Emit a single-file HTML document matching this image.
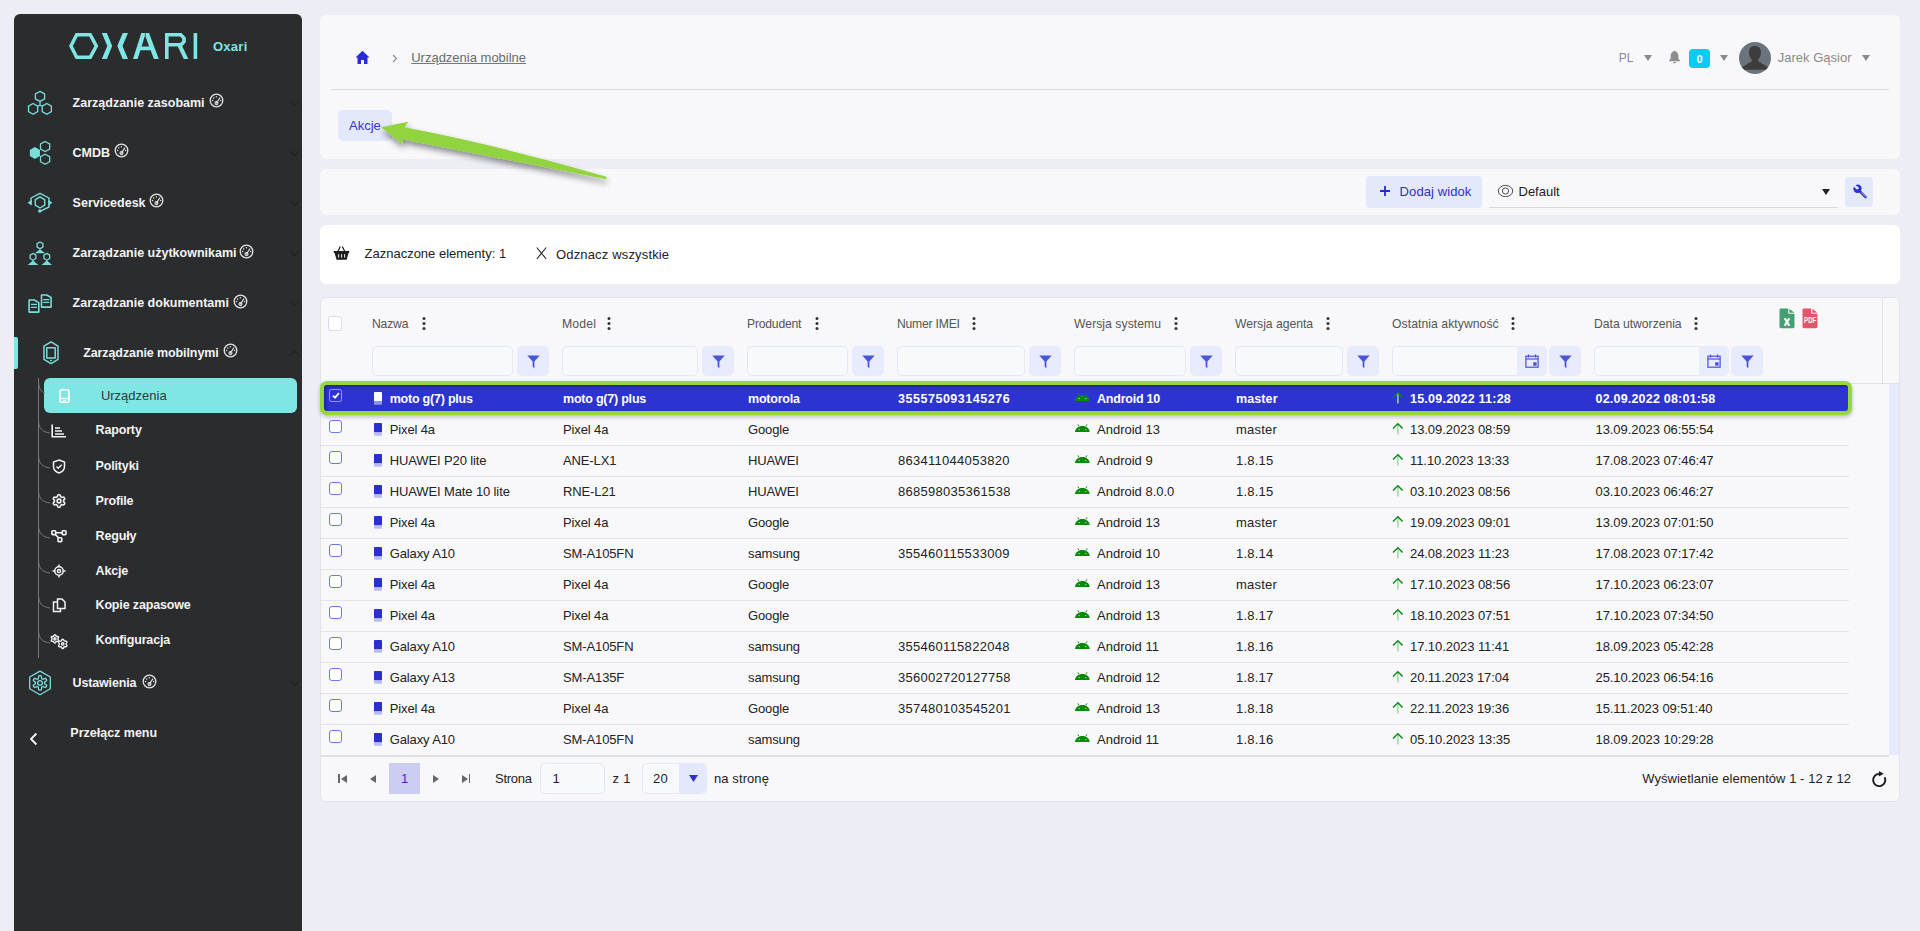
<!DOCTYPE html>
<html><head><meta charset="utf-8"><style>
html,body{margin:0;padding:0;}
body{width:1920px;height:931px;overflow:hidden;position:relative;background:#ededf5;font-family:"Liberation Sans", sans-serif;}
.abs{position:absolute;}
.t{position:absolute;white-space:nowrap;}
#sb{position:absolute;left:14px;top:14px;width:288px;height:940px;background:#2b2c2e;border-radius:6px;}
.card{position:absolute;background:#f8f8fa;border-radius:6px;}
.fb{background:#e8ebfb;border-radius:5px;}
.inp{border:1px solid #e4e7f6;border-radius:5px;background:#f8f9fc;}
</style></head><body>
<div id="sb"></div>
<svg class="abs" style="left:60px;top:28px" width="150" height="36" viewBox="60 28 150 36"><g fill="#7fe6e4" fill-rule="evenodd">
<path d="M69 46 L75.6 33.1 H91.3 L98.3 46 L91.3 58.9 H75.6 Z M72.9 46 L77.7 36.5 H89.2 L94.4 46 L89.2 55.5 H77.7 Z"/>
<path d="M101.8 33.1 H106.9 L112.2 46 L106.9 58.9 H101.8 L107.3 46 Z"/>
<path d="M122.7 33.1 H128 L122.5 46 L128 58.9 H122.7 L117.3 46 Z"/>
<path d="M133 58.9 L141.3 33.1 H149 L158.8 58.9 H153.9 L150.6 50.3 H140.4 L137.6 58.9 Z M141.6 46.4 H149.15 L145.6 36.8 H144.6 Z"/>
<path d="M165 33.1 H181.5 L185.8 37.4 V42.3 L182.2 46.2 L188.4 58.9 H183.8 L177.8 46.6 H168.6 V58.9 H165 Z M168.6 36.6 H180 L182.2 38.8 V41 L180.2 43.1 H168.6 Z"/>
<rect x="193.6" y="33.1" width="3.6" height="25.8"/>
</g><path d="M145.4 33 V40" stroke="#2b2c2e" stroke-width="0.6"/></svg>
<div class="t" style="left:213px;top:39.50px;font-size:13px;line-height:13px;font-weight:bold;color:#7fe3e2;letter-spacing:0.25px">Oxari</div>
<svg class="abs" style="left:0px;top:0px" width="60" height="120" viewBox="0 0 60 120"><g fill="none" stroke="#78dedb" stroke-width="1.3"><path d="M40.00 91.40 L44.60 93.90 L44.60 98.90 L40.00 101.40 L35.40 98.90 L35.40 93.90 Z M33.10 103.50 L37.70 106.20 L37.70 111.60 L33.10 114.30 L28.50 111.60 L28.50 106.20 Z M46.80 103.50 L51.40 106.20 L51.40 111.60 L46.80 114.30 L42.20 111.60 L42.20 106.20 Z M40 101.4 V105.5 M37.7 106.2 L40 105.2 L42.2 106.2"/></g></svg>
<div class="t" style="left:72.6px;top:96.82px;font-size:12.5px;line-height:12.5px;font-weight:bold;color:#f4f4f4;letter-spacing:0px">Zarządzanie zasobami</div>
<svg class="abs" style="left:0px;top:130px" width="60" height="40" viewBox="0 130 60 40"><path d="M34.90 147.00 L39.95 150.00 L39.95 156.00 L34.90 159.00 L29.85 156.00 L29.85 150.00 Z" fill="#78dedb"/><g fill="none" stroke="#78dedb" stroke-width="1.3"><path d="M45.10 141.50 L49.70 144.00 L49.70 149.00 L45.10 151.50 L40.50 149.00 L40.50 144.00 Z M45.10 154.20 L49.70 156.70 L49.70 161.70 L45.10 164.20 L40.50 161.70 L40.50 156.70 Z"/></g></svg>
<div class="t" style="left:72.6px;top:146.62px;font-size:12.5px;line-height:12.5px;font-weight:bold;color:#f4f4f4;letter-spacing:0px">CMDB</div>
<svg class="abs" style="left:0px;top:180px" width="60" height="40" viewBox="0 180 60 40"><g fill="none" stroke="#78dedb" stroke-width="1.4" stroke-linejoin="round"><path d="M31 204.5 V198 L40 193.3 L49 198 V207 L40 211.4"/><path d="M40.00 196.80 L44.70 199.60 L44.70 205.20 L40.00 208.00 L35.30 205.20 L35.30 199.60 Z"/></g><path d="M27.6 202.7 L31.6 199.8 V205.6 Z M52.4 202.7 L48.4 199.8 V205.6 Z" fill="#78dedb"/><circle cx="39.8" cy="211" r="1.7" fill="#78dedb"/></svg>
<div class="t" style="left:72.6px;top:196.72px;font-size:12.5px;line-height:12.5px;font-weight:bold;color:#f4f4f4;letter-spacing:0px">Servicedesk</div>
<svg class="abs" style="left:0px;top:230px" width="60" height="40" viewBox="0 230 60 40"><g fill="none" stroke="#78dedb" stroke-width="1.3"><path d="M40.00 242.00 L42.90 243.70 L42.90 247.10 L40.00 248.80 L37.10 247.10 L37.10 243.70 Z M33.00 253.40 L35.90 255.10 L35.90 258.50 L33.00 260.20 L30.10 258.50 L30.10 255.10 Z M46.80 253.40 L49.70 255.10 L49.70 258.50 L46.80 260.20 L43.90 258.50 L43.90 255.10 Z"/></g><path d="M40 249.3 L45.2 253.2 H34.8 Z M33 260.6 L38.3 265 H27.7 Z M46.8 260.6 L52.1 265 H41.5 Z" fill="#78dedb"/></svg>
<div class="t" style="left:72.6px;top:246.82px;font-size:12.5px;line-height:12.5px;font-weight:bold;color:#f4f4f4;letter-spacing:0px">Zarządzanie użytkownikami</div>
<svg class="abs" style="left:0px;top:280px" width="60" height="40" viewBox="0 280 60 40"><g fill="none" stroke="#78dedb" stroke-width="1.6" stroke-linejoin="round"><path d="M29.1 300 H34.3 L38.8 302.6 V312.1 H29.1 Z"/><path d="M41.5 295 H46.7 L51.1 297.5 V307.1 H41.5 Z"/></g><path d="M30.9 304.3 H37 M30.9 307.3 H37 M43.2 299.6 H49.3 M43.2 302.3 H49.3" stroke="#78dedb" stroke-width="1.2"/></svg>
<div class="t" style="left:72.6px;top:296.82px;font-size:12.5px;line-height:12.5px;font-weight:bold;color:#f4f4f4;letter-spacing:0px">Zarządzanie dokumentami</div>
<svg class="abs" style="left:209.3px;top:92.9px" width="15" height="15" viewBox="-0.5 -0.5 15 15"><circle cx="7" cy="7" r="6.3" fill="none" stroke="#e6e6e6" stroke-width="1.3"/><g fill="#e6e6e6"><circle cx="6.9" cy="3.2" r="0.75"/><circle cx="4.2" cy="4.4" r="0.75"/><circle cx="3.1" cy="7.1" r="0.75"/><circle cx="11.1" cy="7.1" r="0.75"/></g><path d="M7 9.5 L10.2 4.5" stroke="#e6e6e6" stroke-width="1.2" stroke-linecap="round"/><circle cx="7" cy="9.6" r="1.5" fill="none" stroke="#e6e6e6" stroke-width="1.1"/></svg>
<svg class="abs" style="left:113.6px;top:143px" width="15" height="15" viewBox="-0.5 -0.5 15 15"><circle cx="7" cy="7" r="6.3" fill="none" stroke="#e6e6e6" stroke-width="1.3"/><g fill="#e6e6e6"><circle cx="6.9" cy="3.2" r="0.75"/><circle cx="4.2" cy="4.4" r="0.75"/><circle cx="3.1" cy="7.1" r="0.75"/><circle cx="11.1" cy="7.1" r="0.75"/></g><path d="M7 9.5 L10.2 4.5" stroke="#e6e6e6" stroke-width="1.2" stroke-linecap="round"/><circle cx="7" cy="9.6" r="1.5" fill="none" stroke="#e6e6e6" stroke-width="1.1"/></svg>
<svg class="abs" style="left:149.3px;top:193px" width="15" height="15" viewBox="-0.5 -0.5 15 15"><circle cx="7" cy="7" r="6.3" fill="none" stroke="#e6e6e6" stroke-width="1.3"/><g fill="#e6e6e6"><circle cx="6.9" cy="3.2" r="0.75"/><circle cx="4.2" cy="4.4" r="0.75"/><circle cx="3.1" cy="7.1" r="0.75"/><circle cx="11.1" cy="7.1" r="0.75"/></g><path d="M7 9.5 L10.2 4.5" stroke="#e6e6e6" stroke-width="1.2" stroke-linecap="round"/><circle cx="7" cy="9.6" r="1.5" fill="none" stroke="#e6e6e6" stroke-width="1.1"/></svg>
<svg class="abs" style="left:239px;top:244px" width="15" height="15" viewBox="-0.5 -0.5 15 15"><circle cx="7" cy="7" r="6.3" fill="none" stroke="#e6e6e6" stroke-width="1.3"/><g fill="#e6e6e6"><circle cx="6.9" cy="3.2" r="0.75"/><circle cx="4.2" cy="4.4" r="0.75"/><circle cx="3.1" cy="7.1" r="0.75"/><circle cx="11.1" cy="7.1" r="0.75"/></g><path d="M7 9.5 L10.2 4.5" stroke="#e6e6e6" stroke-width="1.2" stroke-linecap="round"/><circle cx="7" cy="9.6" r="1.5" fill="none" stroke="#e6e6e6" stroke-width="1.1"/></svg>
<svg class="abs" style="left:232.7px;top:294px" width="15" height="15" viewBox="-0.5 -0.5 15 15"><circle cx="7" cy="7" r="6.3" fill="none" stroke="#e6e6e6" stroke-width="1.3"/><g fill="#e6e6e6"><circle cx="6.9" cy="3.2" r="0.75"/><circle cx="4.2" cy="4.4" r="0.75"/><circle cx="3.1" cy="7.1" r="0.75"/><circle cx="11.1" cy="7.1" r="0.75"/></g><path d="M7 9.5 L10.2 4.5" stroke="#e6e6e6" stroke-width="1.2" stroke-linecap="round"/><circle cx="7" cy="9.6" r="1.5" fill="none" stroke="#e6e6e6" stroke-width="1.1"/></svg>
<svg class="abs" style="left:288.6px;top:99.5px" width="11.5" height="6.5" viewBox="0 0 11.5 6.5"><path d="M1 1 L5.6 5.5 L10.2 1" fill="none" stroke="#202327" stroke-width="1.7"/></svg>
<svg class="abs" style="left:288.6px;top:149.5px" width="11.5" height="6.5" viewBox="0 0 11.5 6.5"><path d="M1 1 L5.6 5.5 L10.2 1" fill="none" stroke="#202327" stroke-width="1.7"/></svg>
<svg class="abs" style="left:288.6px;top:199.5px" width="11.5" height="6.5" viewBox="0 0 11.5 6.5"><path d="M1 1 L5.6 5.5 L10.2 1" fill="none" stroke="#202327" stroke-width="1.7"/></svg>
<svg class="abs" style="left:288.6px;top:249.5px" width="11.5" height="6.5" viewBox="0 0 11.5 6.5"><path d="M1 1 L5.6 5.5 L10.2 1" fill="none" stroke="#202327" stroke-width="1.7"/></svg>
<svg class="abs" style="left:288.6px;top:299.5px" width="11.5" height="6.5" viewBox="0 0 11.5 6.5"><path d="M1 1 L5.6 5.5 L10.2 1" fill="none" stroke="#202327" stroke-width="1.7"/></svg>
<div class="abs" style="left:14px;top:337px;width:4px;height:32px;background:#80e6e3;border-radius:0 2px 2px 0"></div>
<svg class="abs" style="left:0px;top:330px" width="70" height="40" viewBox="0 330 70 40"><g fill="none" stroke="#78dedb" stroke-width="1.5" stroke-linejoin="round"><path d="M51 341.8 L58 346.1 V359.3 L51 363.6 L44 359.3 V346.1 Z"/><rect x="46.8" y="347.7" width="8.4" height="10.4"/></g><rect x="50" y="359.8" width="2" height="1.3" fill="#78dedb"/></svg>
<div class="t" style="left:83.2px;top:346.62px;font-size:12.5px;line-height:12.5px;font-weight:bold;color:#f4f4f4;letter-spacing:-0.1px">Zarządzanie mobilnymi</div>
<svg class="abs" style="left:223px;top:343px" width="15" height="15" viewBox="-0.5 -0.5 15 15"><circle cx="7" cy="7" r="6.3" fill="none" stroke="#e6e6e6" stroke-width="1.3"/><g fill="#e6e6e6"><circle cx="6.9" cy="3.2" r="0.75"/><circle cx="4.2" cy="4.4" r="0.75"/><circle cx="3.1" cy="7.1" r="0.75"/><circle cx="11.1" cy="7.1" r="0.75"/></g><path d="M7 9.5 L10.2 4.5" stroke="#e6e6e6" stroke-width="1.2" stroke-linecap="round"/><circle cx="7" cy="9.6" r="1.5" fill="none" stroke="#e6e6e6" stroke-width="1.1"/></svg>
<svg class="abs" style="left:288.6px;top:350px" width="11.5" height="6.5" viewBox="0 0 11.5 6.5"><path d="M1 5.5 L5.6 1 L10.2 5.5" fill="none" stroke="#202327" stroke-width="1.7"/></svg>
<div class="abs" style="left:38px;top:378px;width:1px;height:280px;background:#77787c"></div>
<div class="abs" style="left:44px;top:378px;width:253px;height:35px;background:#80e6e3;border-radius:6px"></div>
<svg class="abs" style="left:59px;top:389px" width="11" height="14" viewBox="0 0 11 14"><rect x="1" y="0.8" width="9" height="12.4" rx="1.5" fill="none" stroke="#fff" stroke-width="1.6"/><path d="M1 9.5 H10" stroke="#fff" stroke-width="1.4"/><rect x="4" y="10.8" width="3" height="1" fill="#fff"/></svg>
<div class="t" style="left:100.9px;top:388.80px;font-size:13px;line-height:13px;font-weight:normal;color:#34383a;">Urządzenia</div>
<div class="t" style="left:95.5px;top:424.42px;font-size:12.5px;line-height:12.5px;font-weight:bold;color:#f4f4f4;letter-spacing:-0.15px">Raporty</div>
<svg class="abs" style="left:38px;top:419.5px" width="14" height="16" viewBox="0 0 14 16"><path d="M0.5 0 C0.5 8 4 12 12 13" fill="none" stroke="#77787c" stroke-width="1"/></svg>
<div class="t" style="left:95.5px;top:459.82px;font-size:12.5px;line-height:12.5px;font-weight:bold;color:#f4f4f4;letter-spacing:-0.15px">Polityki</div>
<svg class="abs" style="left:38px;top:454.9px" width="14" height="16" viewBox="0 0 14 16"><path d="M0.5 0 C0.5 8 4 12 12 13" fill="none" stroke="#77787c" stroke-width="1"/></svg>
<div class="t" style="left:95.5px;top:494.62px;font-size:12.5px;line-height:12.5px;font-weight:bold;color:#f4f4f4;letter-spacing:-0.15px">Profile</div>
<svg class="abs" style="left:38px;top:489.7px" width="14" height="16" viewBox="0 0 14 16"><path d="M0.5 0 C0.5 8 4 12 12 13" fill="none" stroke="#77787c" stroke-width="1"/></svg>
<div class="t" style="left:95.5px;top:529.92px;font-size:12.5px;line-height:12.5px;font-weight:bold;color:#f4f4f4;letter-spacing:-0.15px">Reguły</div>
<svg class="abs" style="left:38px;top:525.0px" width="14" height="16" viewBox="0 0 14 16"><path d="M0.5 0 C0.5 8 4 12 12 13" fill="none" stroke="#77787c" stroke-width="1"/></svg>
<div class="t" style="left:95.5px;top:564.72px;font-size:12.5px;line-height:12.5px;font-weight:bold;color:#f4f4f4;letter-spacing:-0.15px">Akcje</div>
<svg class="abs" style="left:38px;top:559.8px" width="14" height="16" viewBox="0 0 14 16"><path d="M0.5 0 C0.5 8 4 12 12 13" fill="none" stroke="#77787c" stroke-width="1"/></svg>
<div class="t" style="left:95.5px;top:599.42px;font-size:12.5px;line-height:12.5px;font-weight:bold;color:#f4f4f4;letter-spacing:-0.15px">Kopie zapasowe</div>
<svg class="abs" style="left:38px;top:594.5px" width="14" height="16" viewBox="0 0 14 16"><path d="M0.5 0 C0.5 8 4 12 12 13" fill="none" stroke="#77787c" stroke-width="1"/></svg>
<div class="t" style="left:95.5px;top:634.42px;font-size:12.5px;line-height:12.5px;font-weight:bold;color:#f4f4f4;letter-spacing:-0.15px">Konfiguracja</div>
<svg class="abs" style="left:38px;top:629.5px" width="14" height="16" viewBox="0 0 14 16"><path d="M0.5 0 C0.5 8 4 12 12 13" fill="none" stroke="#77787c" stroke-width="1"/></svg>
<svg class="abs" style="left:38px;top:381px" width="8" height="14" viewBox="0 0 8 14"><path d="M0.5 0 C0.5 7 3 11 7 12" fill="none" stroke="#77787c" stroke-width="1"/></svg>
<svg class="abs" style="left:51px;top:424px" width="16" height="14" viewBox="0 0 16 14"><path d="M1.2 0.5 V12.8 H15" fill="none" stroke="#f2f2f2" stroke-width="1.6"/><path d="M4 4 H9 M4 7 H11 M4 10 H13" stroke="#f2f2f2" stroke-width="1.5"/></svg>
<svg class="abs" style="left:52px;top:459px" width="14" height="15" viewBox="0 0 14 15"><path d="M7 1 L12.5 3 V7.5 C12.5 10.5 10 13 7 14 C4 13 1.5 10.5 1.5 7.5 V3 Z" fill="none" stroke="#f2f2f2" stroke-width="1.5"/><path d="M4.5 7.5 L6.3 9.3 L9.7 5.8" fill="none" stroke="#f2f2f2" stroke-width="1.5"/></svg>
<svg class="abs" style="left:51px;top:493px" width="16" height="16" viewBox="0 0 16 16"><g fill="none" stroke="#f2f2f2" stroke-width="1.6" stroke-linejoin="round"><path d="M8.00,1.75 L8.54,1.77 L9.06,2.01 L9.40,2.78 L9.61,3.56 L9.92,3.88 L10.28,4.06 L10.61,4.27 L11.03,4.38 L11.82,4.18 L12.66,4.09 L13.12,4.42 L13.41,4.87 L13.66,5.36 L13.71,5.92 L13.22,6.60 L12.65,7.18 L12.53,7.60 L12.55,8.00 L12.53,8.40 L12.65,8.82 L13.22,9.40 L13.71,10.08 L13.66,10.64 L13.41,11.12 L13.12,11.58 L12.66,11.91 L11.82,11.82 L11.03,11.62 L10.61,11.73 L10.28,11.94 L9.92,12.12 L9.61,12.44 L9.40,13.22 L9.06,13.99 L8.54,14.23 L8.00,14.25 L7.46,14.23 L6.94,13.99 L6.60,13.22 L6.39,12.44 L6.08,12.12 L5.72,11.94 L5.39,11.73 L4.97,11.62 L4.18,11.82 L3.34,11.91 L2.88,11.58 L2.59,11.13 L2.34,10.64 L2.29,10.08 L2.78,9.40 L3.35,8.82 L3.47,8.40 L3.45,8.00 L3.47,7.60 L3.35,7.18 L2.78,6.60 L2.29,5.92 L2.34,5.36 L2.59,4.88 L2.88,4.42 L3.34,4.09 L4.18,4.18 L4.97,4.38 L5.39,4.27 L5.73,4.06 L6.08,3.88 L6.39,3.56 L6.60,2.78 L6.94,2.01 L7.46,1.77 Z"/><circle cx="8" cy="8" r="1.9"/></g></svg>
<svg class="abs" style="left:50px;top:529px" width="18" height="14" viewBox="0 0 18 14"><g fill="none" stroke="#f2f2f2" stroke-width="1.6"><rect x="1.9" y="1.8" width="3.8" height="3.8" rx="0.8"/><rect x="12.2" y="1.8" width="3.8" height="3.8" rx="0.8"/><rect x="8" y="8.8" width="3.8" height="3.8" rx="0.8"/><path d="M5.7 3.7 H12.2 M5 5.2 L8.4 8.6"/></g></svg>
<svg class="abs" style="left:52px;top:564px" width="14" height="14" viewBox="0 0 14 14"><g fill="none" stroke="#f2f2f2" stroke-width="1.5"><circle cx="7" cy="7" r="4.2"/><circle cx="7" cy="7" r="1.6"/><path d="M7 0.5 V2.8 M7 11.2 V13.5 M0.5 7 H2.8 M11.2 7 H13.5"/></g></svg>
<svg class="abs" style="left:52px;top:598px" width="14" height="15" viewBox="0 0 14 15"><g fill="none" stroke="#f2f2f2" stroke-width="1.5"><path d="M5.5 4 H1.5 V13.5 H8.5 V10.5"/><path d="M5.5 1 H10 L13 4 V10.5 H5.5 Z"/></g></svg>
<svg class="abs" style="left:40px;top:625px" width="30" height="30" viewBox="40 625 30 30"><g fill="none" stroke="#f2f2f2" stroke-width="1.4" stroke-linejoin="round"><path d="M54.90,634.80 L55.17,634.85 L55.41,635.01 L55.63,635.24 L55.81,635.52 L55.95,635.80 L56.08,636.06 L56.20,636.26 L56.35,636.39 L56.54,636.45 L56.77,636.46 L57.06,636.44 L57.37,636.43 L57.70,636.44 L58.01,636.51 L58.27,636.65 L58.45,636.85 L58.54,637.11 L58.53,637.40 L58.43,637.70 L58.28,637.99 L58.11,638.26 L57.95,638.50 L57.84,638.71 L57.80,638.90 L57.84,639.09 L57.95,639.30 L58.11,639.54 L58.28,639.81 L58.43,640.10 L58.53,640.40 L58.54,640.69 L58.45,640.95 L58.27,641.15 L58.01,641.29 L57.70,641.36 L57.37,641.37 L57.06,641.36 L56.77,641.34 L56.54,641.35 L56.35,641.41 L56.20,641.54 L56.08,641.74 L55.95,642.00 L55.81,642.28 L55.63,642.56 L55.41,642.79 L55.17,642.95 L54.90,643.00 L54.63,642.95 L54.39,642.79 L54.17,642.56 L53.99,642.28 L53.85,642.00 L53.72,641.74 L53.60,641.54 L53.45,641.41 L53.26,641.35 L53.03,641.34 L52.74,641.36 L52.43,641.37 L52.10,641.36 L51.79,641.29 L51.53,641.15 L51.35,640.95 L51.26,640.69 L51.27,640.40 L51.37,640.10 L51.52,639.81 L51.69,639.54 L51.85,639.30 L51.96,639.09 L52.00,638.90 L51.96,638.71 L51.85,638.50 L51.69,638.26 L51.52,637.99 L51.37,637.70 L51.27,637.40 L51.26,637.11 L51.35,636.85 L51.53,636.65 L51.79,636.51 L52.10,636.44 L52.43,636.43 L52.74,636.44 L53.03,636.46 L53.26,636.45 L53.45,636.39 L53.60,636.26 L53.72,636.06 L53.85,635.80 L53.99,635.52 L54.17,635.24 L54.39,635.01 L54.63,634.85 Z"/><circle cx="54.9" cy="638.9" r="1.1"/><path d="M62.70,639.25 L63.00,639.31 L63.28,639.48 L63.53,639.73 L63.74,640.04 L63.91,640.35 L64.05,640.63 L64.20,640.85 L64.38,641.00 L64.59,641.07 L64.86,641.09 L65.17,641.08 L65.53,641.07 L65.89,641.10 L66.24,641.19 L66.53,641.34 L66.73,641.57 L66.83,641.87 L66.82,642.19 L66.72,642.53 L66.56,642.86 L66.38,643.17 L66.21,643.44 L66.09,643.68 L66.05,643.90 L66.09,644.12 L66.21,644.36 L66.38,644.63 L66.56,644.94 L66.72,645.27 L66.82,645.61 L66.83,645.93 L66.73,646.23 L66.53,646.46 L66.24,646.61 L65.89,646.70 L65.53,646.73 L65.17,646.72 L64.86,646.71 L64.59,646.73 L64.38,646.80 L64.20,646.95 L64.05,647.17 L63.91,647.45 L63.74,647.76 L63.53,648.07 L63.28,648.32 L63.00,648.49 L62.70,648.55 L62.40,648.49 L62.12,648.32 L61.87,648.07 L61.66,647.76 L61.49,647.45 L61.35,647.17 L61.20,646.95 L61.03,646.80 L60.81,646.73 L60.54,646.71 L60.23,646.72 L59.87,646.73 L59.51,646.70 L59.16,646.61 L58.87,646.46 L58.67,646.23 L58.57,645.93 L58.58,645.61 L58.68,645.27 L58.84,644.94 L59.02,644.63 L59.19,644.36 L59.31,644.12 L59.35,643.90 L59.31,643.68 L59.19,643.44 L59.02,643.17 L58.84,642.86 L58.68,642.53 L58.58,642.19 L58.57,641.87 L58.67,641.57 L58.87,641.34 L59.16,641.19 L59.51,641.10 L59.87,641.07 L60.23,641.08 L60.54,641.09 L60.81,641.07 L61.02,641.00 L61.20,640.85 L61.35,640.63 L61.49,640.35 L61.66,640.04 L61.87,639.73 L62.12,639.48 L62.40,639.31 Z"/><circle cx="62.7" cy="643.9" r="1.2"/></g></svg>
<svg class="abs" style="left:0px;top:660px" width="60" height="40" viewBox="0 660 60 40"><g fill="none" stroke="#78dedb" stroke-width="1.3" stroke-linejoin="round"><path d="M40.00 671.10 L50.30 677.00 L50.30 688.80 L40.00 694.70 L29.70 688.80 L29.70 677.00 Z"/><path d="M40.00,675.60 L40.64,675.63 L41.24,675.85 L41.53,677.20 L41.59,678.54 L41.90,678.82 L42.25,679.00 L42.58,679.21 L42.98,679.35 L44.17,678.73 L45.48,678.30 L45.98,678.71 L46.32,679.25 L46.62,679.81 L46.73,680.45 L45.70,681.37 L44.57,682.09 L44.48,682.51 L44.50,682.90 L44.48,683.29 L44.57,683.71 L45.70,684.43 L46.73,685.35 L46.62,685.99 L46.32,686.55 L45.98,687.09 L45.48,687.50 L44.17,687.07 L42.98,686.45 L42.58,686.59 L42.25,686.80 L41.90,686.98 L41.59,687.26 L41.53,688.60 L41.24,689.95 L40.64,690.17 L40.00,690.20 L39.36,690.17 L38.76,689.95 L38.47,688.60 L38.41,687.26 L38.10,686.98 L37.75,686.80 L37.42,686.59 L37.02,686.45 L35.83,687.07 L34.52,687.50 L34.02,687.09 L33.68,686.55 L33.38,685.99 L33.27,685.35 L34.30,684.43 L35.43,683.71 L35.52,683.29 L35.50,682.90 L35.52,682.51 L35.43,682.09 L34.30,681.37 L33.27,680.45 L33.38,679.81 L33.68,679.25 L34.02,678.71 L34.52,678.30 L35.83,678.73 L37.02,679.35 L37.42,679.21 L37.75,679.00 L38.10,678.82 L38.41,678.54 L38.47,677.20 L38.76,675.85 L39.36,675.63 Z"/><circle cx="40" cy="682.9" r="2.3"/></g></svg>
<div class="t" style="left:72.5px;top:677.12px;font-size:12.5px;line-height:12.5px;font-weight:bold;color:#f4f4f4;letter-spacing:-0.15px">Ustawienia</div>
<svg class="abs" style="left:142px;top:673.5px" width="15" height="15" viewBox="-0.5 -0.5 15 15"><circle cx="7" cy="7" r="6.3" fill="none" stroke="#e6e6e6" stroke-width="1.3"/><g fill="#e6e6e6"><circle cx="6.9" cy="3.2" r="0.75"/><circle cx="4.2" cy="4.4" r="0.75"/><circle cx="3.1" cy="7.1" r="0.75"/><circle cx="11.1" cy="7.1" r="0.75"/></g><path d="M7 9.5 L10.2 4.5" stroke="#e6e6e6" stroke-width="1.2" stroke-linecap="round"/><circle cx="7" cy="9.6" r="1.5" fill="none" stroke="#e6e6e6" stroke-width="1.1"/></svg>
<svg class="abs" style="left:288.6px;top:679.5px" width="11.5" height="6.5" viewBox="0 0 11.5 6.5"><path d="M1 1 L5.6 5.5 L10.2 1" fill="none" stroke="#202327" stroke-width="1.7"/></svg>
<svg class="abs" style="left:28px;top:731px" width="12" height="16" viewBox="0 0 12 16"><path d="M8.4 2.5 L3 8 L8.4 13.5" fill="none" stroke="#f4f4f4" stroke-width="1.9"/></svg>
<div class="t" style="left:70.3px;top:726.92px;font-size:12.5px;line-height:12.5px;font-weight:bold;color:#f4f4f4;letter-spacing:0px">Przełącz menu</div>
<div class="card" style="left:320px;top:15px;width:1580px;height:144px"></div>
<svg class="abs" style="left:355px;top:50px" width="15" height="15" viewBox="0 0 15 15"><path d="M7.5 0.8 L14.5 7.5 H12.5 V14 H9 V10 H6 V14 H2.5 V7.5 H0.5 Z" fill="#2a2ad6"/></svg>
<svg class="abs" style="left:392px;top:54px" width="6" height="9" viewBox="0 0 6 9"><path d="M1 1 L4.5 4.5 L1 8" fill="none" stroke="#8a8a8a" stroke-width="1.1"/></svg>
<div class="t" style="left:411.2px;top:51.00px;font-size:13px;line-height:13px;font-weight:normal;color:#6b6b6b;text-decoration:underline;text-underline-offset:0.6px;text-decoration-color:#777;letter-spacing:0px">Urządzenia mobilne</div>
<div class="abs" style="left:331px;top:89px;width:1558px;height:1px;background:#dcdce2"></div>
<div class="abs" style="left:338px;top:110px;width:54px;height:31px;background:#e4e8fb;border-radius:5px"></div>
<div class="t" style="left:349px;top:118.90px;font-size:13px;line-height:13px;font-weight:normal;color:#3434c8;">Akcje</div>
<div class="t" style="left:1618.7px;top:51.84px;font-size:12px;line-height:12px;font-weight:normal;color:#8a8a8a;">PL</div>
<svg class="abs" style="left:1644px;top:55px" width="8" height="6" viewBox="0 0 8 6"><polygon points="0,0 8,0 4.0,6" fill="#8a8a8a"/></svg>
<svg class="abs" style="left:1668px;top:50px" width="13" height="14" viewBox="0 0 13 14"><path d="M6.5 0.6 C6.9 0.6 7.1 0.9 7.1 1.3 C9.2 1.8 10.4 3.6 10.4 6 V8.8 L12 10.6 V11.2 H1 V10.6 L2.6 8.8 V6 C2.6 3.6 3.8 1.8 5.9 1.3 C5.9 0.9 6.1 0.6 6.5 0.6 Z" fill="#8e8e8e"/><path d="M5 12 H8 C8 12.9 7.3 13.4 6.5 13.4 C5.7 13.4 5 12.9 5 12 Z" fill="#8e8e8e"/></svg>
<div class="abs" style="left:1689px;top:49px;width:21px;height:19px;background:#0fcdf0;border-radius:4px;color:#fff;font-weight:bold;font-size:11px;line-height:20px;text-align:center;background:#0ccbf0">0</div>
<svg class="abs" style="left:1720px;top:55px" width="8" height="6" viewBox="0 0 8 6"><polygon points="0,0 8,0 4.0,6" fill="#8a8a8a"/></svg>
<svg class="abs" style="left:1739px;top:42px" width="32" height="32" viewBox="0 0 32 32"><defs><clipPath id="av"><circle cx="16" cy="16" r="16"/></clipPath></defs><circle cx="16" cy="16" r="16" fill="#6b737c"/><g clip-path="url(#av)" fill="#3d3d3d"><path d="M16 4 C19.8 4 22 6.2 22 10 C22 13.5 20.8 16.2 19.2 17.6 V19.2 L28.8 25 V27.7 H3.2 V25 L12.8 19.2 V17.6 C11.2 16.2 10 13.5 10 10 C10 6.2 12.2 4 16 4 Z"/></g></svg>
<div class="t" style="left:1777.8px;top:51.00px;font-size:13px;line-height:13px;font-weight:normal;color:#8a8a8a;letter-spacing:0px">Jarek Gąsior</div>
<svg class="abs" style="left:1862px;top:55px" width="8" height="6" viewBox="0 0 8 6"><polygon points="0,0 8,0 4.0,6" fill="#8a8a8a"/></svg>
<div class="card" style="left:320px;top:169px;width:1580px;height:46px"></div>
<div class="abs" style="left:1366px;top:176px;width:116px;height:31.5px;background:#e4e8fb;border-radius:4px"></div>
<svg class="abs" style="left:1379px;top:185px" width="12" height="12" viewBox="0 0 12 12"><path d="M6 1 V11 M1 6 H11" stroke="#2a2ac8" stroke-width="1.8"/></svg>
<div class="t" style="left:1399.6px;top:185.00px;font-size:13px;line-height:13px;font-weight:normal;color:#3030c0;letter-spacing:0.09px">Dodaj widok</div>
<div class="abs" style="left:1489px;top:206.5px;width:349px;height:1px;background:#d8d8de"></div>
<svg class="abs" style="left:1497px;top:184px" width="17" height="14" viewBox="0 0 17 14"><ellipse cx="8.5" cy="7" rx="7.2" ry="5.6" fill="none" stroke="#444" stroke-width="0.95"/><circle cx="8.5" cy="7" r="3.1" fill="none" stroke="#444" stroke-width="0.95"/></svg>
<div class="t" style="left:1518.5px;top:185.00px;font-size:13px;line-height:13px;font-weight:normal;color:#222;letter-spacing:0px">Default</div>
<svg class="abs" style="left:1821.5px;top:188.8px" width="8" height="6" viewBox="0 0 8 6"><polygon points="0,0 8,0 4.0,6" fill="#222"/></svg>
<div class="abs" style="left:1845px;top:177px;width:28px;height:30px;background:#e4e8fb;border-radius:4px"></div>
<svg class="abs" style="left:1850px;top:182px" width="20" height="20" viewBox="0 0 20 20"><path d="M5.5 3.2 C6.5 2.5 7.5 2.3 8.2 2.4 C10.3 2.7 11.9 4.5 11.7 6.8 C11.6 7.5 11.4 8.1 11 8.7 L16.4 14.3 C16.9 14.8 16.9 15.5 16.4 16 C15.9 16.5 15.2 16.5 14.7 16 L9.3 10.4 C8.6 10.8 7.8 11 7 10.9 C4.8 10.6 3.2 8.7 3.4 6.5 C3.4 5.8 3.7 5.2 4 4.7 L6.2 7 C6.8 7.6 7.7 7.6 8.3 7 C8.9 6.4 8.9 5.5 8.3 4.9 Z" fill="#2e32d2"/><path d="M11.3 10.3 L15.5 14.7" stroke="#c9cdf7" stroke-width="0.7"/></svg>
<div class="abs" style="left:320px;top:225px;width:1580px;height:59px;background:#fff;border-radius:6px"></div>
<svg class="abs" style="left:326px;top:238px" width="30" height="30" viewBox="326 238 30 30"><path d="M333.8 251 H349.2 V253 H348.5 L346.6 259.8 H336.6 L334.6 253 H333.8 Z" fill="#1e1e1e"/><path d="M340.3 246.5 L337.9 251.5 M342.3 246.5 L344.8 251.5" stroke="#1e1e1e" stroke-width="1.2"/><path d="M338.6 254.2 V257.6 M341.6 254.2 V257.6 M344.6 254.2 V257.6" stroke="#f4f4f4" stroke-width="1"/></svg>
<div class="t" style="left:364.5px;top:247.00px;font-size:13px;line-height:13px;font-weight:normal;color:#222;letter-spacing:0px">Zaznaczone elementy: 1</div>
<svg class="abs" style="left:536px;top:247px" width="11" height="12.5" viewBox="0 0 11 12.5"><path d="M0.8 0.5 L10.2 12 M10.2 0.5 L0.8 12" stroke="#1a1a1a" stroke-width="1.05"/></svg>
<div class="t" style="left:556px;top:247.60px;font-size:13px;line-height:13px;font-weight:normal;color:#222;letter-spacing:0.16px">Odznacz wszystkie</div>
<div class="abs" style="left:320px;top:297px;width:1578px;height:503px;background:#f8f8fa;border:1px solid #e2e4ea;border-radius:6px"></div>
<div class="abs" style="left:328px;top:316px;width:12px;height:13px;background:#fff;border:1px solid #d9dce6;border-radius:3px"></div>
<div class="t" style="left:372px;top:317.67px;font-size:12.2px;line-height:12.2px;font-weight:normal;color:#555;letter-spacing:-0.2px">Nazwa</div>
<svg class="abs" style="left:421.6px;top:316px" width="4" height="15" viewBox="0 0 4 15"><circle cx="2" cy="2.5" r="1.5" fill="#333"/><circle cx="2" cy="7.5" r="1.5" fill="#333"/><circle cx="2" cy="12.5" r="1.5" fill="#333"/></svg>
<div class="t" style="left:562px;top:317.67px;font-size:12.2px;line-height:12.2px;font-weight:normal;color:#555;letter-spacing:0.22px">Model</div>
<svg class="abs" style="left:607.4px;top:316px" width="4" height="15" viewBox="0 0 4 15"><circle cx="2" cy="2.5" r="1.5" fill="#333"/><circle cx="2" cy="7.5" r="1.5" fill="#333"/><circle cx="2" cy="12.5" r="1.5" fill="#333"/></svg>
<div class="t" style="left:747px;top:317.67px;font-size:12.2px;line-height:12.2px;font-weight:normal;color:#555;letter-spacing:-0.22px">Produdent</div>
<svg class="abs" style="left:815.3px;top:316px" width="4" height="15" viewBox="0 0 4 15"><circle cx="2" cy="2.5" r="1.5" fill="#333"/><circle cx="2" cy="7.5" r="1.5" fill="#333"/><circle cx="2" cy="12.5" r="1.5" fill="#333"/></svg>
<div class="t" style="left:897px;top:317.67px;font-size:12.2px;line-height:12.2px;font-weight:normal;color:#555;letter-spacing:-0.23px">Numer IMEI</div>
<svg class="abs" style="left:971.5px;top:316px" width="4" height="15" viewBox="0 0 4 15"><circle cx="2" cy="2.5" r="1.5" fill="#333"/><circle cx="2" cy="7.5" r="1.5" fill="#333"/><circle cx="2" cy="12.5" r="1.5" fill="#333"/></svg>
<div class="t" style="left:1074px;top:317.67px;font-size:12.2px;line-height:12.2px;font-weight:normal;color:#555;letter-spacing:0.04px">Wersja systemu</div>
<svg class="abs" style="left:1173.5px;top:316px" width="4" height="15" viewBox="0 0 4 15"><circle cx="2" cy="2.5" r="1.5" fill="#333"/><circle cx="2" cy="7.5" r="1.5" fill="#333"/><circle cx="2" cy="12.5" r="1.5" fill="#333"/></svg>
<div class="t" style="left:1235px;top:317.67px;font-size:12.2px;line-height:12.2px;font-weight:normal;color:#555;letter-spacing:-0.02px">Wersja agenta</div>
<svg class="abs" style="left:1326px;top:316px" width="4" height="15" viewBox="0 0 4 15"><circle cx="2" cy="2.5" r="1.5" fill="#333"/><circle cx="2" cy="7.5" r="1.5" fill="#333"/><circle cx="2" cy="12.5" r="1.5" fill="#333"/></svg>
<div class="t" style="left:1392px;top:317.67px;font-size:12.2px;line-height:12.2px;font-weight:normal;color:#555;letter-spacing:0.06px">Ostatnia aktywność</div>
<svg class="abs" style="left:1511.4px;top:316px" width="4" height="15" viewBox="0 0 4 15"><circle cx="2" cy="2.5" r="1.5" fill="#333"/><circle cx="2" cy="7.5" r="1.5" fill="#333"/><circle cx="2" cy="12.5" r="1.5" fill="#333"/></svg>
<div class="t" style="left:1594px;top:317.67px;font-size:12.2px;line-height:12.2px;font-weight:normal;color:#555;letter-spacing:-0.03px">Data utworzenia</div>
<svg class="abs" style="left:1694.3px;top:316px" width="4" height="15" viewBox="0 0 4 15"><circle cx="2" cy="2.5" r="1.5" fill="#333"/><circle cx="2" cy="7.5" r="1.5" fill="#333"/><circle cx="2" cy="12.5" r="1.5" fill="#333"/></svg>
<div class="abs inp" style="left:372px;top:346px;width:139px;height:28px"></div>
<div class="abs fb" style="left:517px;top:346px;width:32px;height:30px"><svg class="abs" style="left:9.5px;top:8.7px" width="13" height="14" viewBox="0 0 13 14"><path d="M0.3 0.6 H12.7 L7.4 6.4 V13.6 L5.6 11.6 V6.4 Z" fill="#4b55d9"/></svg></div>
<div class="abs inp" style="left:562px;top:346px;width:134px;height:28px"></div>
<div class="abs fb" style="left:702px;top:346px;width:32px;height:30px"><svg class="abs" style="left:9.5px;top:8.7px" width="13" height="14" viewBox="0 0 13 14"><path d="M0.3 0.6 H12.7 L7.4 6.4 V13.6 L5.6 11.6 V6.4 Z" fill="#4b55d9"/></svg></div>
<div class="abs inp" style="left:747px;top:346px;width:99px;height:28px"></div>
<div class="abs fb" style="left:852px;top:346px;width:32px;height:30px"><svg class="abs" style="left:9.5px;top:8.7px" width="13" height="14" viewBox="0 0 13 14"><path d="M0.3 0.6 H12.7 L7.4 6.4 V13.6 L5.6 11.6 V6.4 Z" fill="#4b55d9"/></svg></div>
<div class="abs inp" style="left:897px;top:346px;width:126px;height:28px"></div>
<div class="abs fb" style="left:1029px;top:346px;width:32px;height:30px"><svg class="abs" style="left:9.5px;top:8.7px" width="13" height="14" viewBox="0 0 13 14"><path d="M0.3 0.6 H12.7 L7.4 6.4 V13.6 L5.6 11.6 V6.4 Z" fill="#4b55d9"/></svg></div>
<div class="abs inp" style="left:1074px;top:346px;width:110px;height:28px"></div>
<div class="abs fb" style="left:1190px;top:346px;width:32px;height:30px"><svg class="abs" style="left:9.5px;top:8.7px" width="13" height="14" viewBox="0 0 13 14"><path d="M0.3 0.6 H12.7 L7.4 6.4 V13.6 L5.6 11.6 V6.4 Z" fill="#4b55d9"/></svg></div>
<div class="abs inp" style="left:1235px;top:346px;width:106px;height:28px"></div>
<div class="abs fb" style="left:1347px;top:346px;width:32px;height:30px"><svg class="abs" style="left:9.5px;top:8.7px" width="13" height="14" viewBox="0 0 13 14"><path d="M0.3 0.6 H12.7 L7.4 6.4 V13.6 L5.6 11.6 V6.4 Z" fill="#4b55d9"/></svg></div>
<div class="abs inp" style="left:1392px;top:346px;width:152px;height:28px"></div>
<div class="abs fb" style="left:1549px;top:346px;width:32px;height:30px"><svg class="abs" style="left:9.5px;top:8.7px" width="13" height="14" viewBox="0 0 13 14"><path d="M0.3 0.6 H12.7 L7.4 6.4 V13.6 L5.6 11.6 V6.4 Z" fill="#4b55d9"/></svg></div>
<div class="abs inp" style="left:1594px;top:346px;width:132px;height:28px"></div>
<div class="abs fb" style="left:1731px;top:346px;width:32px;height:30px"><svg class="abs" style="left:9.5px;top:8.7px" width="13" height="14" viewBox="0 0 13 14"><path d="M0.3 0.6 H12.7 L7.4 6.4 V13.6 L5.6 11.6 V6.4 Z" fill="#4b55d9"/></svg></div>
<div class="abs" style="left:1517px;top:346px;width:30px;height:30px;background:#e9ecfb;border-radius:0 5px 5px 0"><svg class="abs" style="left:8px;top:8px" width="14" height="14" viewBox="0 0 14 14"><rect x="0.9" y="2.2" width="12.2" height="11" fill="none" stroke="#4a4fd8" stroke-width="1.2"/><path d="M0.9 5 H13.1" stroke="#4a4fd8" stroke-width="1.2"/><path d="M3.5 0.5 V3.5 M10.5 0.5 V3.5" stroke="#4a4fd8" stroke-width="1.2"/><rect x="8.2" y="8.3" width="3.4" height="3.4" fill="#4a4fd8"/></svg></div>
<div class="abs" style="left:1699px;top:346px;width:30px;height:30px;background:#e9ecfb;border-radius:0 5px 5px 0"><svg class="abs" style="left:8px;top:8px" width="14" height="14" viewBox="0 0 14 14"><rect x="0.9" y="2.2" width="12.2" height="11" fill="none" stroke="#4a4fd8" stroke-width="1.2"/><path d="M0.9 5 H13.1" stroke="#4a4fd8" stroke-width="1.2"/><path d="M3.5 0.5 V3.5 M10.5 0.5 V3.5" stroke="#4a4fd8" stroke-width="1.2"/><rect x="8.2" y="8.3" width="3.4" height="3.4" fill="#4a4fd8"/></svg></div>
<svg class="abs" style="left:1779px;top:308px" width="16" height="21" viewBox="0 0 16 21"><path d="M1.8 0.5 H9.2 V4.5 C9.2 5.3 9.7 5.8 10.5 5.8 H15.5 V18.5 C15.5 19.5 14.9 20.2 13.9 20.2 H2.1 C1.1 20.2 0.5 19.5 0.5 18.5 V2 C0.5 1.1 1 0.5 1.8 0.5 Z" fill="#45a06f"/><path d="M10.4 0.7 L15.4 4.8 H10.4 Z" fill="#45a06f"/><path d="M5.7 10.2 L10.3 17.7 M10.3 10.2 L5.7 17.7" stroke="#fff" stroke-width="2.1"/></svg>
<svg class="abs" style="left:1802px;top:308px" width="16" height="21" viewBox="0 0 16 21"><path d="M1.8 0.5 H9.2 V4.5 C9.2 5.3 9.7 5.8 10.5 5.8 H15.5 V18.5 C15.5 19.5 14.9 20.2 13.9 20.2 H2.1 C1.1 20.2 0.5 19.5 0.5 18.5 V2 C0.5 1.1 1 0.5 1.8 0.5 Z" fill="#e2566a"/><path d="M10.4 0.7 L15.4 4.8 H10.4 Z" fill="#e2566a"/><text x="8.2" y="15.2" font-family="Liberation Sans" font-weight="bold" font-size="7.6" fill="#fff" text-anchor="middle" textLength="12.3" lengthAdjust="spacingAndGlyphs" transform="translate(0,-2.5) scale(1,1.15)">PDF</text></svg>
<div class="abs" style="left:1882px;top:298px;width:1px;height:85px;background:#dfe2e8"></div>
<div class="abs" style="left:321px;top:383px;width:1578px;height:1px;background:#dfe2e8"></div>
<div class="abs" style="left:1889px;top:384px;width:10px;height:371px;background:#e7eafa"></div>
<div class="abs" style="left:320px;top:380.5px;width:1532px;height:34.5px;background:#94d83c;border-radius:7px;box-shadow:0 2px 4px rgba(0,0,0,0.25)"></div>
<div class="abs" style="left:324px;top:384.5px;width:1524px;height:26.5px;background:#2c33d0;border-radius:3px;box-shadow:inset 2px 2px 3px rgba(0,0,30,0.28)"></div>
<div class="abs" style="left:329px;top:389px;width:11px;height:11px;border:1px solid rgba(255,255,255,0.5);border-radius:2.5px"><svg class="abs" style="left:1.8px;top:2.3px" width="8" height="7" viewBox="0 0 8 7"><path d="M0.9 3.6 L3 5.6 L6.9 1.2" fill="none" stroke="#fff" stroke-width="1.8"/></svg></div>
<svg class="abs" style="left:374px;top:392px" width="8" height="13" viewBox="0 0 8 13"><rect x="0" y="0" width="8" height="9.5" rx="0.8" fill="#ffffff"/><rect x="0" y="9.2" width="8" height="3.6" rx="0.8" fill="#8d92e8"/></svg>
<div class="t" style="left:389.7px;top:393.22px;font-size:12.5px;line-height:12.5px;font-weight:bold;color:#ffffff;letter-spacing:-0.22px">moto g(7) plus</div>
<div class="t" style="left:563px;top:393.22px;font-size:12.5px;line-height:12.5px;font-weight:bold;color:#ffffff;letter-spacing:-0.22px">moto g(7) plus</div>
<div class="t" style="left:748px;top:393.22px;font-size:12.5px;line-height:12.5px;font-weight:bold;color:#ffffff;letter-spacing:-0.22px">motorola</div>
<div class="t" style="left:898px;top:393.22px;font-size:12.5px;line-height:12.5px;font-weight:bold;color:#ffffff;letter-spacing:0.53px">355575093145276</div>
<svg class="abs" style="left:1074px;top:392px" width="17" height="10" viewBox="0 0 17 10"><path d="M1 9.1 C1.3 5.2 4.4 2.9 8.4 2.9 C12.4 2.9 15.4 5.2 15.7 9.1 Z" fill="#078a07"/><path d="M3.8 1.3 L5 3.4 M13 1.3 L11.8 3.4" stroke="#078a07" stroke-width="0.9"/><circle cx="5.2" cy="6.6" r="0.7" fill="#bfe5bf"/><circle cx="11.8" cy="6.6" r="0.7" fill="#bfe5bf"/></svg>
<div class="t" style="left:1097px;top:393.22px;font-size:12.5px;line-height:12.5px;font-weight:bold;color:#ffffff;letter-spacing:-0.22px">Android 10</div>
<div class="t" style="left:1236px;top:393.22px;font-size:12.5px;line-height:12.5px;font-weight:bold;color:#ffffff;letter-spacing:0.1px">master</div>
<svg class="abs" style="left:1390px;top:391px" width="15" height="14" viewBox="0 0 15 14"><path d="M7.9 2.2 V12.6" stroke="#9fd6a6" stroke-width="1.5"/><path d="M3 6.6 L7.9 1.7 L12.6 6.6" fill="none" stroke="#0a8a14" stroke-width="1.4"/></svg>
<div class="t" style="left:1410px;top:393.22px;font-size:12.5px;line-height:12.5px;font-weight:bold;color:#ffffff;letter-spacing:0.23px">15.09.2022 11:28</div>
<div class="t" style="left:1595.5px;top:393.22px;font-size:12.5px;line-height:12.5px;font-weight:bold;color:#ffffff;letter-spacing:0.2px">02.09.2022 08:01:58</div>
<div class="abs" style="left:329px;top:420px;width:11px;height:11px;border:1px solid #6e78ee;border-radius:3px;background:#fff"></div>
<svg class="abs" style="left:374px;top:423px" width="8" height="13" viewBox="0 0 8 13"><rect x="0" y="0" width="8" height="9.5" rx="0.8" fill="#2b2fd0"/><rect x="0" y="9.2" width="8" height="3.6" rx="0.8" fill="#b9bdf2"/></svg>
<div class="t" style="left:389.7px;top:423.00px;font-size:13px;line-height:13px;font-weight:normal;color:#222;letter-spacing:-0.12px">Pixel 4a</div>
<div class="t" style="left:563px;top:423.00px;font-size:13px;line-height:13px;font-weight:normal;color:#222;letter-spacing:-0.12px">Pixel 4a</div>
<div class="t" style="left:748px;top:423.00px;font-size:13px;line-height:13px;font-weight:normal;color:#222;letter-spacing:-0.12px">Google</div>
<svg class="abs" style="left:1074px;top:423px" width="17" height="10" viewBox="0 0 17 10"><path d="M1 9.1 C1.3 5.2 4.4 2.9 8.4 2.9 C12.4 2.9 15.4 5.2 15.7 9.1 Z" fill="#078a07"/><path d="M3.8 1.3 L5 3.4 M13 1.3 L11.8 3.4" stroke="#078a07" stroke-width="0.9"/><circle cx="5.2" cy="6.6" r="0.7" fill="#bfe5bf"/><circle cx="11.8" cy="6.6" r="0.7" fill="#bfe5bf"/></svg>
<div class="t" style="left:1097px;top:423.00px;font-size:13px;line-height:13px;font-weight:normal;color:#222;letter-spacing:0px">Android 13</div>
<div class="t" style="left:1236px;top:423.00px;font-size:13px;line-height:13px;font-weight:normal;color:#222;letter-spacing:0.2px">master</div>
<svg class="abs" style="left:1390px;top:422px" width="15" height="14" viewBox="0 0 15 14"><path d="M7.9 2.2 V12.6" stroke="#9fd6a6" stroke-width="1.5"/><path d="M3 6.6 L7.9 1.7 L12.6 6.6" fill="none" stroke="#0a8a14" stroke-width="1.4"/></svg>
<div class="t" style="left:1410px;top:423.00px;font-size:13px;line-height:13px;font-weight:normal;color:#222;letter-spacing:-0.07px">13.09.2023 08:59</div>
<div class="t" style="left:1595.5px;top:423.00px;font-size:13px;line-height:13px;font-weight:normal;color:#222;letter-spacing:-0.07px">13.09.2023 06:55:54</div>
<div class="abs" style="left:321px;top:445px;width:1528px;height:1px;background:#e4e4ea"></div>
<div class="abs" style="left:329px;top:451px;width:11px;height:11px;border:1px solid #6e78ee;border-radius:3px;background:#fff"></div>
<svg class="abs" style="left:374px;top:454px" width="8" height="13" viewBox="0 0 8 13"><rect x="0" y="0" width="8" height="9.5" rx="0.8" fill="#2b2fd0"/><rect x="0" y="9.2" width="8" height="3.6" rx="0.8" fill="#b9bdf2"/></svg>
<div class="t" style="left:389.7px;top:454.00px;font-size:13px;line-height:13px;font-weight:normal;color:#222;letter-spacing:-0.12px">HUAWEI P20 lite</div>
<div class="t" style="left:563px;top:454.00px;font-size:13px;line-height:13px;font-weight:normal;color:#222;letter-spacing:-0.12px">ANE-LX1</div>
<div class="t" style="left:748px;top:454.00px;font-size:13px;line-height:13px;font-weight:normal;color:#222;letter-spacing:-0.12px">HUAWEI</div>
<div class="t" style="left:898px;top:454.00px;font-size:13px;line-height:13px;font-weight:normal;color:#222;letter-spacing:0.28px">863411044053820</div>
<svg class="abs" style="left:1074px;top:454px" width="17" height="10" viewBox="0 0 17 10"><path d="M1 9.1 C1.3 5.2 4.4 2.9 8.4 2.9 C12.4 2.9 15.4 5.2 15.7 9.1 Z" fill="#078a07"/><path d="M3.8 1.3 L5 3.4 M13 1.3 L11.8 3.4" stroke="#078a07" stroke-width="0.9"/><circle cx="5.2" cy="6.6" r="0.7" fill="#bfe5bf"/><circle cx="11.8" cy="6.6" r="0.7" fill="#bfe5bf"/></svg>
<div class="t" style="left:1097px;top:454.00px;font-size:13px;line-height:13px;font-weight:normal;color:#222;letter-spacing:0px">Android 9</div>
<div class="t" style="left:1236px;top:454.00px;font-size:13px;line-height:13px;font-weight:normal;color:#222;letter-spacing:0.2px">1.8.15</div>
<svg class="abs" style="left:1390px;top:453px" width="15" height="14" viewBox="0 0 15 14"><path d="M7.9 2.2 V12.6" stroke="#9fd6a6" stroke-width="1.5"/><path d="M3 6.6 L7.9 1.7 L12.6 6.6" fill="none" stroke="#0a8a14" stroke-width="1.4"/></svg>
<div class="t" style="left:1410px;top:454.00px;font-size:13px;line-height:13px;font-weight:normal;color:#222;letter-spacing:-0.07px">11.10.2023 13:33</div>
<div class="t" style="left:1595.5px;top:454.00px;font-size:13px;line-height:13px;font-weight:normal;color:#222;letter-spacing:-0.07px">17.08.2023 07:46:47</div>
<div class="abs" style="left:321px;top:476px;width:1528px;height:1px;background:#e4e4ea"></div>
<div class="abs" style="left:329px;top:482px;width:11px;height:11px;border:1px solid #6e78ee;border-radius:3px;background:#fff"></div>
<svg class="abs" style="left:374px;top:485px" width="8" height="13" viewBox="0 0 8 13"><rect x="0" y="0" width="8" height="9.5" rx="0.8" fill="#2b2fd0"/><rect x="0" y="9.2" width="8" height="3.6" rx="0.8" fill="#b9bdf2"/></svg>
<div class="t" style="left:389.7px;top:485.00px;font-size:13px;line-height:13px;font-weight:normal;color:#222;letter-spacing:-0.12px">HUAWEI Mate 10 lite</div>
<div class="t" style="left:563px;top:485.00px;font-size:13px;line-height:13px;font-weight:normal;color:#222;letter-spacing:-0.12px">RNE-L21</div>
<div class="t" style="left:748px;top:485.00px;font-size:13px;line-height:13px;font-weight:normal;color:#222;letter-spacing:-0.12px">HUAWEI</div>
<div class="t" style="left:898px;top:485.00px;font-size:13px;line-height:13px;font-weight:normal;color:#222;letter-spacing:0.28px">868598035361538</div>
<svg class="abs" style="left:1074px;top:485px" width="17" height="10" viewBox="0 0 17 10"><path d="M1 9.1 C1.3 5.2 4.4 2.9 8.4 2.9 C12.4 2.9 15.4 5.2 15.7 9.1 Z" fill="#078a07"/><path d="M3.8 1.3 L5 3.4 M13 1.3 L11.8 3.4" stroke="#078a07" stroke-width="0.9"/><circle cx="5.2" cy="6.6" r="0.7" fill="#bfe5bf"/><circle cx="11.8" cy="6.6" r="0.7" fill="#bfe5bf"/></svg>
<div class="t" style="left:1097px;top:485.00px;font-size:13px;line-height:13px;font-weight:normal;color:#222;letter-spacing:0px">Android 8.0.0</div>
<div class="t" style="left:1236px;top:485.00px;font-size:13px;line-height:13px;font-weight:normal;color:#222;letter-spacing:0.2px">1.8.15</div>
<svg class="abs" style="left:1390px;top:484px" width="15" height="14" viewBox="0 0 15 14"><path d="M7.9 2.2 V12.6" stroke="#9fd6a6" stroke-width="1.5"/><path d="M3 6.6 L7.9 1.7 L12.6 6.6" fill="none" stroke="#0a8a14" stroke-width="1.4"/></svg>
<div class="t" style="left:1410px;top:485.00px;font-size:13px;line-height:13px;font-weight:normal;color:#222;letter-spacing:-0.07px">03.10.2023 08:56</div>
<div class="t" style="left:1595.5px;top:485.00px;font-size:13px;line-height:13px;font-weight:normal;color:#222;letter-spacing:-0.07px">03.10.2023 06:46:27</div>
<div class="abs" style="left:321px;top:507px;width:1528px;height:1px;background:#e4e4ea"></div>
<div class="abs" style="left:329px;top:513px;width:11px;height:11px;border:1px solid #6e78ee;border-radius:3px;background:#fff"></div>
<svg class="abs" style="left:374px;top:516px" width="8" height="13" viewBox="0 0 8 13"><rect x="0" y="0" width="8" height="9.5" rx="0.8" fill="#2b2fd0"/><rect x="0" y="9.2" width="8" height="3.6" rx="0.8" fill="#b9bdf2"/></svg>
<div class="t" style="left:389.7px;top:516.00px;font-size:13px;line-height:13px;font-weight:normal;color:#222;letter-spacing:-0.12px">Pixel 4a</div>
<div class="t" style="left:563px;top:516.00px;font-size:13px;line-height:13px;font-weight:normal;color:#222;letter-spacing:-0.12px">Pixel 4a</div>
<div class="t" style="left:748px;top:516.00px;font-size:13px;line-height:13px;font-weight:normal;color:#222;letter-spacing:-0.12px">Google</div>
<svg class="abs" style="left:1074px;top:516px" width="17" height="10" viewBox="0 0 17 10"><path d="M1 9.1 C1.3 5.2 4.4 2.9 8.4 2.9 C12.4 2.9 15.4 5.2 15.7 9.1 Z" fill="#078a07"/><path d="M3.8 1.3 L5 3.4 M13 1.3 L11.8 3.4" stroke="#078a07" stroke-width="0.9"/><circle cx="5.2" cy="6.6" r="0.7" fill="#bfe5bf"/><circle cx="11.8" cy="6.6" r="0.7" fill="#bfe5bf"/></svg>
<div class="t" style="left:1097px;top:516.00px;font-size:13px;line-height:13px;font-weight:normal;color:#222;letter-spacing:0px">Android 13</div>
<div class="t" style="left:1236px;top:516.00px;font-size:13px;line-height:13px;font-weight:normal;color:#222;letter-spacing:0.2px">master</div>
<svg class="abs" style="left:1390px;top:515px" width="15" height="14" viewBox="0 0 15 14"><path d="M7.9 2.2 V12.6" stroke="#9fd6a6" stroke-width="1.5"/><path d="M3 6.6 L7.9 1.7 L12.6 6.6" fill="none" stroke="#0a8a14" stroke-width="1.4"/></svg>
<div class="t" style="left:1410px;top:516.00px;font-size:13px;line-height:13px;font-weight:normal;color:#222;letter-spacing:-0.07px">19.09.2023 09:01</div>
<div class="t" style="left:1595.5px;top:516.00px;font-size:13px;line-height:13px;font-weight:normal;color:#222;letter-spacing:-0.07px">13.09.2023 07:01:50</div>
<div class="abs" style="left:321px;top:538px;width:1528px;height:1px;background:#e4e4ea"></div>
<div class="abs" style="left:329px;top:544px;width:11px;height:11px;border:1px solid #6e78ee;border-radius:3px;background:#fff"></div>
<svg class="abs" style="left:374px;top:547px" width="8" height="13" viewBox="0 0 8 13"><rect x="0" y="0" width="8" height="9.5" rx="0.8" fill="#2b2fd0"/><rect x="0" y="9.2" width="8" height="3.6" rx="0.8" fill="#b9bdf2"/></svg>
<div class="t" style="left:389.7px;top:547.00px;font-size:13px;line-height:13px;font-weight:normal;color:#222;letter-spacing:-0.12px">Galaxy A10</div>
<div class="t" style="left:563px;top:547.00px;font-size:13px;line-height:13px;font-weight:normal;color:#222;letter-spacing:-0.12px">SM-A105FN</div>
<div class="t" style="left:748px;top:547.00px;font-size:13px;line-height:13px;font-weight:normal;color:#222;letter-spacing:-0.12px">samsung</div>
<div class="t" style="left:898px;top:547.00px;font-size:13px;line-height:13px;font-weight:normal;color:#222;letter-spacing:0.28px">355460115533009</div>
<svg class="abs" style="left:1074px;top:547px" width="17" height="10" viewBox="0 0 17 10"><path d="M1 9.1 C1.3 5.2 4.4 2.9 8.4 2.9 C12.4 2.9 15.4 5.2 15.7 9.1 Z" fill="#078a07"/><path d="M3.8 1.3 L5 3.4 M13 1.3 L11.8 3.4" stroke="#078a07" stroke-width="0.9"/><circle cx="5.2" cy="6.6" r="0.7" fill="#bfe5bf"/><circle cx="11.8" cy="6.6" r="0.7" fill="#bfe5bf"/></svg>
<div class="t" style="left:1097px;top:547.00px;font-size:13px;line-height:13px;font-weight:normal;color:#222;letter-spacing:0px">Android 10</div>
<div class="t" style="left:1236px;top:547.00px;font-size:13px;line-height:13px;font-weight:normal;color:#222;letter-spacing:0.2px">1.8.14</div>
<svg class="abs" style="left:1390px;top:546px" width="15" height="14" viewBox="0 0 15 14"><path d="M7.9 2.2 V12.6" stroke="#9fd6a6" stroke-width="1.5"/><path d="M3 6.6 L7.9 1.7 L12.6 6.6" fill="none" stroke="#0a8a14" stroke-width="1.4"/></svg>
<div class="t" style="left:1410px;top:547.00px;font-size:13px;line-height:13px;font-weight:normal;color:#222;letter-spacing:-0.07px">24.08.2023 11:23</div>
<div class="t" style="left:1595.5px;top:547.00px;font-size:13px;line-height:13px;font-weight:normal;color:#222;letter-spacing:-0.07px">17.08.2023 07:17:42</div>
<div class="abs" style="left:321px;top:569px;width:1528px;height:1px;background:#e4e4ea"></div>
<div class="abs" style="left:329px;top:575px;width:11px;height:11px;border:1px solid #6e78ee;border-radius:3px;background:#fff"></div>
<svg class="abs" style="left:374px;top:578px" width="8" height="13" viewBox="0 0 8 13"><rect x="0" y="0" width="8" height="9.5" rx="0.8" fill="#2b2fd0"/><rect x="0" y="9.2" width="8" height="3.6" rx="0.8" fill="#b9bdf2"/></svg>
<div class="t" style="left:389.7px;top:578.00px;font-size:13px;line-height:13px;font-weight:normal;color:#222;letter-spacing:-0.12px">Pixel 4a</div>
<div class="t" style="left:563px;top:578.00px;font-size:13px;line-height:13px;font-weight:normal;color:#222;letter-spacing:-0.12px">Pixel 4a</div>
<div class="t" style="left:748px;top:578.00px;font-size:13px;line-height:13px;font-weight:normal;color:#222;letter-spacing:-0.12px">Google</div>
<svg class="abs" style="left:1074px;top:578px" width="17" height="10" viewBox="0 0 17 10"><path d="M1 9.1 C1.3 5.2 4.4 2.9 8.4 2.9 C12.4 2.9 15.4 5.2 15.7 9.1 Z" fill="#078a07"/><path d="M3.8 1.3 L5 3.4 M13 1.3 L11.8 3.4" stroke="#078a07" stroke-width="0.9"/><circle cx="5.2" cy="6.6" r="0.7" fill="#bfe5bf"/><circle cx="11.8" cy="6.6" r="0.7" fill="#bfe5bf"/></svg>
<div class="t" style="left:1097px;top:578.00px;font-size:13px;line-height:13px;font-weight:normal;color:#222;letter-spacing:0px">Android 13</div>
<div class="t" style="left:1236px;top:578.00px;font-size:13px;line-height:13px;font-weight:normal;color:#222;letter-spacing:0.2px">master</div>
<svg class="abs" style="left:1390px;top:577px" width="15" height="14" viewBox="0 0 15 14"><path d="M7.9 2.2 V12.6" stroke="#9fd6a6" stroke-width="1.5"/><path d="M3 6.6 L7.9 1.7 L12.6 6.6" fill="none" stroke="#0a8a14" stroke-width="1.4"/></svg>
<div class="t" style="left:1410px;top:578.00px;font-size:13px;line-height:13px;font-weight:normal;color:#222;letter-spacing:-0.07px">17.10.2023 08:56</div>
<div class="t" style="left:1595.5px;top:578.00px;font-size:13px;line-height:13px;font-weight:normal;color:#222;letter-spacing:-0.07px">17.10.2023 06:23:07</div>
<div class="abs" style="left:321px;top:600px;width:1528px;height:1px;background:#e4e4ea"></div>
<div class="abs" style="left:329px;top:606px;width:11px;height:11px;border:1px solid #6e78ee;border-radius:3px;background:#fff"></div>
<svg class="abs" style="left:374px;top:609px" width="8" height="13" viewBox="0 0 8 13"><rect x="0" y="0" width="8" height="9.5" rx="0.8" fill="#2b2fd0"/><rect x="0" y="9.2" width="8" height="3.6" rx="0.8" fill="#b9bdf2"/></svg>
<div class="t" style="left:389.7px;top:609.00px;font-size:13px;line-height:13px;font-weight:normal;color:#222;letter-spacing:-0.12px">Pixel 4a</div>
<div class="t" style="left:563px;top:609.00px;font-size:13px;line-height:13px;font-weight:normal;color:#222;letter-spacing:-0.12px">Pixel 4a</div>
<div class="t" style="left:748px;top:609.00px;font-size:13px;line-height:13px;font-weight:normal;color:#222;letter-spacing:-0.12px">Google</div>
<svg class="abs" style="left:1074px;top:609px" width="17" height="10" viewBox="0 0 17 10"><path d="M1 9.1 C1.3 5.2 4.4 2.9 8.4 2.9 C12.4 2.9 15.4 5.2 15.7 9.1 Z" fill="#078a07"/><path d="M3.8 1.3 L5 3.4 M13 1.3 L11.8 3.4" stroke="#078a07" stroke-width="0.9"/><circle cx="5.2" cy="6.6" r="0.7" fill="#bfe5bf"/><circle cx="11.8" cy="6.6" r="0.7" fill="#bfe5bf"/></svg>
<div class="t" style="left:1097px;top:609.00px;font-size:13px;line-height:13px;font-weight:normal;color:#222;letter-spacing:0px">Android 13</div>
<div class="t" style="left:1236px;top:609.00px;font-size:13px;line-height:13px;font-weight:normal;color:#222;letter-spacing:0.2px">1.8.17</div>
<svg class="abs" style="left:1390px;top:608px" width="15" height="14" viewBox="0 0 15 14"><path d="M7.9 2.2 V12.6" stroke="#9fd6a6" stroke-width="1.5"/><path d="M3 6.6 L7.9 1.7 L12.6 6.6" fill="none" stroke="#0a8a14" stroke-width="1.4"/></svg>
<div class="t" style="left:1410px;top:609.00px;font-size:13px;line-height:13px;font-weight:normal;color:#222;letter-spacing:-0.07px">18.10.2023 07:51</div>
<div class="t" style="left:1595.5px;top:609.00px;font-size:13px;line-height:13px;font-weight:normal;color:#222;letter-spacing:-0.07px">17.10.2023 07:34:50</div>
<div class="abs" style="left:321px;top:631px;width:1528px;height:1px;background:#e4e4ea"></div>
<div class="abs" style="left:329px;top:637px;width:11px;height:11px;border:1px solid #6e78ee;border-radius:3px;background:#fff"></div>
<svg class="abs" style="left:374px;top:640px" width="8" height="13" viewBox="0 0 8 13"><rect x="0" y="0" width="8" height="9.5" rx="0.8" fill="#2b2fd0"/><rect x="0" y="9.2" width="8" height="3.6" rx="0.8" fill="#b9bdf2"/></svg>
<div class="t" style="left:389.7px;top:640.00px;font-size:13px;line-height:13px;font-weight:normal;color:#222;letter-spacing:-0.12px">Galaxy A10</div>
<div class="t" style="left:563px;top:640.00px;font-size:13px;line-height:13px;font-weight:normal;color:#222;letter-spacing:-0.12px">SM-A105FN</div>
<div class="t" style="left:748px;top:640.00px;font-size:13px;line-height:13px;font-weight:normal;color:#222;letter-spacing:-0.12px">samsung</div>
<div class="t" style="left:898px;top:640.00px;font-size:13px;line-height:13px;font-weight:normal;color:#222;letter-spacing:0.28px">355460115822048</div>
<svg class="abs" style="left:1074px;top:640px" width="17" height="10" viewBox="0 0 17 10"><path d="M1 9.1 C1.3 5.2 4.4 2.9 8.4 2.9 C12.4 2.9 15.4 5.2 15.7 9.1 Z" fill="#078a07"/><path d="M3.8 1.3 L5 3.4 M13 1.3 L11.8 3.4" stroke="#078a07" stroke-width="0.9"/><circle cx="5.2" cy="6.6" r="0.7" fill="#bfe5bf"/><circle cx="11.8" cy="6.6" r="0.7" fill="#bfe5bf"/></svg>
<div class="t" style="left:1097px;top:640.00px;font-size:13px;line-height:13px;font-weight:normal;color:#222;letter-spacing:0px">Android 11</div>
<div class="t" style="left:1236px;top:640.00px;font-size:13px;line-height:13px;font-weight:normal;color:#222;letter-spacing:0.2px">1.8.16</div>
<svg class="abs" style="left:1390px;top:639px" width="15" height="14" viewBox="0 0 15 14"><path d="M7.9 2.2 V12.6" stroke="#9fd6a6" stroke-width="1.5"/><path d="M3 6.6 L7.9 1.7 L12.6 6.6" fill="none" stroke="#0a8a14" stroke-width="1.4"/></svg>
<div class="t" style="left:1410px;top:640.00px;font-size:13px;line-height:13px;font-weight:normal;color:#222;letter-spacing:-0.07px">17.10.2023 11:41</div>
<div class="t" style="left:1595.5px;top:640.00px;font-size:13px;line-height:13px;font-weight:normal;color:#222;letter-spacing:-0.07px">18.09.2023 05:42:28</div>
<div class="abs" style="left:321px;top:662px;width:1528px;height:1px;background:#e4e4ea"></div>
<div class="abs" style="left:329px;top:668px;width:11px;height:11px;border:1px solid #6e78ee;border-radius:3px;background:#fff"></div>
<svg class="abs" style="left:374px;top:671px" width="8" height="13" viewBox="0 0 8 13"><rect x="0" y="0" width="8" height="9.5" rx="0.8" fill="#2b2fd0"/><rect x="0" y="9.2" width="8" height="3.6" rx="0.8" fill="#b9bdf2"/></svg>
<div class="t" style="left:389.7px;top:671.00px;font-size:13px;line-height:13px;font-weight:normal;color:#222;letter-spacing:-0.12px">Galaxy A13</div>
<div class="t" style="left:563px;top:671.00px;font-size:13px;line-height:13px;font-weight:normal;color:#222;letter-spacing:-0.12px">SM-A135F</div>
<div class="t" style="left:748px;top:671.00px;font-size:13px;line-height:13px;font-weight:normal;color:#222;letter-spacing:-0.12px">samsung</div>
<div class="t" style="left:898px;top:671.00px;font-size:13px;line-height:13px;font-weight:normal;color:#222;letter-spacing:0.28px">356002720127758</div>
<svg class="abs" style="left:1074px;top:671px" width="17" height="10" viewBox="0 0 17 10"><path d="M1 9.1 C1.3 5.2 4.4 2.9 8.4 2.9 C12.4 2.9 15.4 5.2 15.7 9.1 Z" fill="#078a07"/><path d="M3.8 1.3 L5 3.4 M13 1.3 L11.8 3.4" stroke="#078a07" stroke-width="0.9"/><circle cx="5.2" cy="6.6" r="0.7" fill="#bfe5bf"/><circle cx="11.8" cy="6.6" r="0.7" fill="#bfe5bf"/></svg>
<div class="t" style="left:1097px;top:671.00px;font-size:13px;line-height:13px;font-weight:normal;color:#222;letter-spacing:0px">Android 12</div>
<div class="t" style="left:1236px;top:671.00px;font-size:13px;line-height:13px;font-weight:normal;color:#222;letter-spacing:0.2px">1.8.17</div>
<svg class="abs" style="left:1390px;top:670px" width="15" height="14" viewBox="0 0 15 14"><path d="M7.9 2.2 V12.6" stroke="#9fd6a6" stroke-width="1.5"/><path d="M3 6.6 L7.9 1.7 L12.6 6.6" fill="none" stroke="#0a8a14" stroke-width="1.4"/></svg>
<div class="t" style="left:1410px;top:671.00px;font-size:13px;line-height:13px;font-weight:normal;color:#222;letter-spacing:-0.07px">20.11.2023 17:04</div>
<div class="t" style="left:1595.5px;top:671.00px;font-size:13px;line-height:13px;font-weight:normal;color:#222;letter-spacing:-0.07px">25.10.2023 06:54:16</div>
<div class="abs" style="left:321px;top:693px;width:1528px;height:1px;background:#e4e4ea"></div>
<div class="abs" style="left:329px;top:699px;width:11px;height:11px;border:1px solid #6e78ee;border-radius:3px;background:#fff"></div>
<svg class="abs" style="left:374px;top:702px" width="8" height="13" viewBox="0 0 8 13"><rect x="0" y="0" width="8" height="9.5" rx="0.8" fill="#2b2fd0"/><rect x="0" y="9.2" width="8" height="3.6" rx="0.8" fill="#b9bdf2"/></svg>
<div class="t" style="left:389.7px;top:702.00px;font-size:13px;line-height:13px;font-weight:normal;color:#222;letter-spacing:-0.12px">Pixel 4a</div>
<div class="t" style="left:563px;top:702.00px;font-size:13px;line-height:13px;font-weight:normal;color:#222;letter-spacing:-0.12px">Pixel 4a</div>
<div class="t" style="left:748px;top:702.00px;font-size:13px;line-height:13px;font-weight:normal;color:#222;letter-spacing:-0.12px">Google</div>
<div class="t" style="left:898px;top:702.00px;font-size:13px;line-height:13px;font-weight:normal;color:#222;letter-spacing:0.28px">357480103545201</div>
<svg class="abs" style="left:1074px;top:702px" width="17" height="10" viewBox="0 0 17 10"><path d="M1 9.1 C1.3 5.2 4.4 2.9 8.4 2.9 C12.4 2.9 15.4 5.2 15.7 9.1 Z" fill="#078a07"/><path d="M3.8 1.3 L5 3.4 M13 1.3 L11.8 3.4" stroke="#078a07" stroke-width="0.9"/><circle cx="5.2" cy="6.6" r="0.7" fill="#bfe5bf"/><circle cx="11.8" cy="6.6" r="0.7" fill="#bfe5bf"/></svg>
<div class="t" style="left:1097px;top:702.00px;font-size:13px;line-height:13px;font-weight:normal;color:#222;letter-spacing:0px">Android 13</div>
<div class="t" style="left:1236px;top:702.00px;font-size:13px;line-height:13px;font-weight:normal;color:#222;letter-spacing:0.2px">1.8.18</div>
<svg class="abs" style="left:1390px;top:701px" width="15" height="14" viewBox="0 0 15 14"><path d="M7.9 2.2 V12.6" stroke="#9fd6a6" stroke-width="1.5"/><path d="M3 6.6 L7.9 1.7 L12.6 6.6" fill="none" stroke="#0a8a14" stroke-width="1.4"/></svg>
<div class="t" style="left:1410px;top:702.00px;font-size:13px;line-height:13px;font-weight:normal;color:#222;letter-spacing:-0.07px">22.11.2023 19:36</div>
<div class="t" style="left:1595.5px;top:702.00px;font-size:13px;line-height:13px;font-weight:normal;color:#222;letter-spacing:-0.07px">15.11.2023 09:51:40</div>
<div class="abs" style="left:321px;top:724px;width:1528px;height:1px;background:#e4e4ea"></div>
<div class="abs" style="left:329px;top:730px;width:11px;height:11px;border:1px solid #6e78ee;border-radius:3px;background:#fff"></div>
<svg class="abs" style="left:374px;top:733px" width="8" height="13" viewBox="0 0 8 13"><rect x="0" y="0" width="8" height="9.5" rx="0.8" fill="#2b2fd0"/><rect x="0" y="9.2" width="8" height="3.6" rx="0.8" fill="#b9bdf2"/></svg>
<div class="t" style="left:389.7px;top:733.00px;font-size:13px;line-height:13px;font-weight:normal;color:#222;letter-spacing:-0.12px">Galaxy A10</div>
<div class="t" style="left:563px;top:733.00px;font-size:13px;line-height:13px;font-weight:normal;color:#222;letter-spacing:-0.12px">SM-A105FN</div>
<div class="t" style="left:748px;top:733.00px;font-size:13px;line-height:13px;font-weight:normal;color:#222;letter-spacing:-0.12px">samsung</div>
<svg class="abs" style="left:1074px;top:733px" width="17" height="10" viewBox="0 0 17 10"><path d="M1 9.1 C1.3 5.2 4.4 2.9 8.4 2.9 C12.4 2.9 15.4 5.2 15.7 9.1 Z" fill="#078a07"/><path d="M3.8 1.3 L5 3.4 M13 1.3 L11.8 3.4" stroke="#078a07" stroke-width="0.9"/><circle cx="5.2" cy="6.6" r="0.7" fill="#bfe5bf"/><circle cx="11.8" cy="6.6" r="0.7" fill="#bfe5bf"/></svg>
<div class="t" style="left:1097px;top:733.00px;font-size:13px;line-height:13px;font-weight:normal;color:#222;letter-spacing:0px">Android 11</div>
<div class="t" style="left:1236px;top:733.00px;font-size:13px;line-height:13px;font-weight:normal;color:#222;letter-spacing:0.2px">1.8.16</div>
<svg class="abs" style="left:1390px;top:732px" width="15" height="14" viewBox="0 0 15 14"><path d="M7.9 2.2 V12.6" stroke="#9fd6a6" stroke-width="1.5"/><path d="M3 6.6 L7.9 1.7 L12.6 6.6" fill="none" stroke="#0a8a14" stroke-width="1.4"/></svg>
<div class="t" style="left:1410px;top:733.00px;font-size:13px;line-height:13px;font-weight:normal;color:#222;letter-spacing:-0.07px">05.10.2023 13:35</div>
<div class="t" style="left:1595.5px;top:733.00px;font-size:13px;line-height:13px;font-weight:normal;color:#222;letter-spacing:-0.07px">18.09.2023 10:29:28</div>
<div class="abs" style="left:321px;top:755px;width:1568px;height:2px;background:#dee1e6"></div>
<div class="abs" style="left:338px;top:774px;width:1.5px;height:9px;background:#666"></div>
<svg class="abs" style="left:340.5px;top:774.5px" width="6" height="8" viewBox="0 0 6 8"><polygon points="6,0 6,8 0,4" fill="#666"/></svg>
<svg class="abs" style="left:370px;top:774.5px" width="6" height="8" viewBox="0 0 6 8"><polygon points="6,0 6,8 0,4" fill="#666"/></svg>
<div class="abs" style="left:389px;top:763px;width:31px;height:31px;background:#cbcdf2"></div>
<div class="t" style="left:401px;top:772.00px;font-size:13px;line-height:13px;font-weight:normal;color:#3030c0;">1</div>
<svg class="abs" style="left:433px;top:774.5px" width="6" height="8" viewBox="0 0 6 8"><polygon points="0,0 0,8 6,4" fill="#666"/></svg>
<svg class="abs" style="left:462px;top:774.5px" width="6" height="8" viewBox="0 0 6 8"><polygon points="0,0 0,8 6,4" fill="#666"/></svg>
<div class="abs" style="left:468.5px;top:774px;width:1.5px;height:9px;background:#666"></div>
<div class="t" style="left:495px;top:772.00px;font-size:13px;line-height:13px;font-weight:normal;color:#222;letter-spacing:-0.25px">Strona</div>
<div class="abs inp" style="left:540px;top:763px;width:63px;height:29px"></div>
<div class="t" style="left:552.6px;top:772.00px;font-size:13px;line-height:13px;font-weight:normal;color:#222;">1</div>
<div class="t" style="left:612.5px;top:772.00px;font-size:13px;line-height:13px;font-weight:normal;color:#222;letter-spacing:0.3px">z 1</div>
<div class="abs inp" style="left:642px;top:763px;width:63px;height:29px"></div>
<div class="abs" style="left:679px;top:764px;width:27px;height:29px;background:#e4e8fb;border-radius:0 5px 5px 0"></div>
<div class="t" style="left:653px;top:772.00px;font-size:13px;line-height:13px;font-weight:normal;color:#222;letter-spacing:0.3px">20</div>
<svg class="abs" style="left:688.5px;top:775px" width="9" height="7" viewBox="0 0 9 7"><polygon points="0,0 9,0 4.5,7" fill="#3030c8"/></svg>
<div class="t" style="left:714px;top:772.00px;font-size:13px;line-height:13px;font-weight:normal;color:#222;letter-spacing:0.09px">na stronę</div>
<div class="t" style="left:1642.2px;top:771.80px;font-size:13px;line-height:13px;font-weight:normal;color:#222;letter-spacing:0.05px">Wyświetlanie elementów 1 - 12 z 12</div>
<svg class="abs" style="left:1871px;top:771px" width="16" height="17" viewBox="0 0 16 17"><path d="M13.6 6.2 A6.1 6.1 0 1 1 8.2 2.9" fill="none" stroke="#1a1a1a" stroke-width="1.9"/><polygon points="7.9,0.1 12.7,2.8 7.9,5.6" fill="#1a1a1a"/></svg>
<svg class="abs" style="left:370px;top:110px" width="250" height="80" viewBox="370 110 250 80">
<defs><filter id="sh" x="-20%" y="-50%" width="140%" height="200%"><feGaussianBlur in="SourceAlpha" stdDeviation="3"/><feOffset dx="1" dy="4"/><feComponentTransfer><feFuncA type="linear" slope="0.45"/></feComponentTransfer><feMerge><feMergeNode/><feMergeNode in="SourceGraphic"/></feMerge></filter></defs>
<path filter="url(#sh)" d="M381 127.3 L408.3 121.8 L404.5 127.3 Q500 145.5 605.5 176.6 Q607.8 177.8 606 179.2 Q500 158.5 401.9 139.3 L402.8 144.6 Z" fill="#92d441"/>
</svg>
</body></html>
